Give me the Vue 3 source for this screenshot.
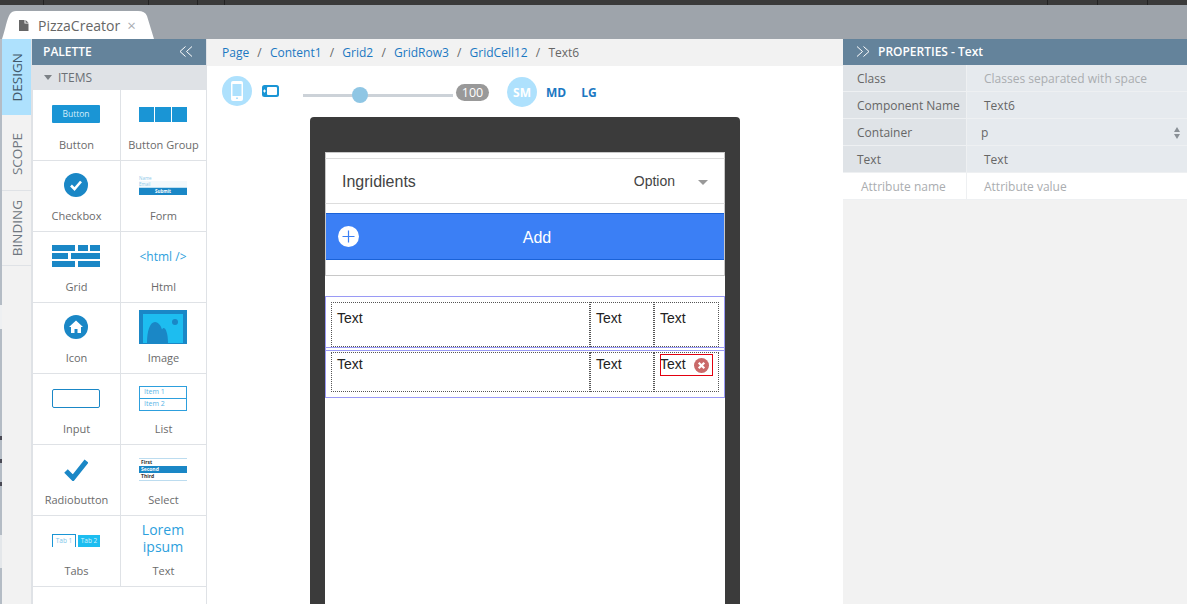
<template>
  <div class="app">
    <div class="topstrip"></div>
    <div class="tabbar">
      <div class="tab">
        <svg class="file-ico" width="10" height="11" viewBox="0 0 10 11"><path d="M0 0h5.500v3.500H9.500V11H0z" fill="#666"/><path d="M6.500 0l3 2.700h-3z" fill="#666"/></svg>
        <span class="tab-name">PizzaCreator</span>
        <span class="tab-x">×</span>
      </div>
    </div>
    <div class="main">
      <div class="edge"></div>
      <div class="sidetabs">
        <div class="stab active h76"><span>DESIGN</span></div>
        <div class="stab h76 scope"><span>SCOPE</span></div>
        <div class="stab h75"><span>BINDING</span></div>
      </div>

      <div class="palette">
        <div class="pal-head">
          <span>PALETTE</span>
          <svg width="14" height="11" viewBox="0 0 14 11" fill="none" stroke="#fff" stroke-width="1"><path d="M6.500.5l-5.500 5 5.500 5M13 .5l-5.500 5 5.500 5"/></svg>
        </div>
        <div class="pal-sub"><i class="tri"></i>ITEMS</div>
        <div class="pal-grid">
          <div class="item">
            <div class="ico"><div class="i-button">Button</div></div>
            <div class="lbl">Button</div>
          </div>
          <div class="item">
            <div class="ico"><div class="i-group"><b></b><b></b><b></b></div></div>
            <div class="lbl">Button Group</div>
          </div>
          <div class="item">
            <div class="ico">
              <svg width="24" height="24" viewBox="0 0 24 24"><circle cx="12" cy="12" r="12" fill="#1a87c6"/><path d="M7 12.500l3.500 3.500 6.500-7.500" fill="none" stroke="#fff" stroke-width="2.600"/></svg>
            </div>
            <div class="lbl">Checkbox</div>
          </div>
          <div class="item">
            <div class="ico">
              <div class="i-form">
                <div class="f-line">Name</div>
                <div class="f-line shade">Email</div>
                <div class="f-btn">Submit</div>
              </div>
            </div>
            <div class="lbl">Form</div>
          </div>
          <div class="item">
            <div class="ico">
              <svg width="48" height="22" viewBox="0 0 48 22" fill="#1a87c6"><rect width="23" height="6"/><rect x="26" width="10" height="6"/><rect x="38" width="10" height="6"/><rect y="8" width="16" height="6"/><rect x="19" y="8" width="29" height="6"/><rect y="16" width="23" height="6"/><rect x="26" y="16" width="22" height="6"/></svg>
            </div>
            <div class="lbl">Grid</div>
          </div>
          <div class="item">
            <div class="ico"><span class="i-html">&lt;html /&gt;</span></div>
            <div class="lbl">Html</div>
          </div>
          <div class="item">
            <div class="ico">
              <svg width="24" height="24" viewBox="0 0 24 24"><circle cx="12" cy="12" r="12" fill="#1a87c6"/><path d="M12 5.500l7 6.500h-2v6h-3.500v-4h-3v4H7v-6H5z" fill="#fff"/></svg>
            </div>
            <div class="lbl">Icon</div>
          </div>
          <div class="item">
            <div class="ico">
              <svg width="48" height="34" viewBox="0 0 48 34"><rect width="48" height="34" fill="#1a87c6"/><rect x="4" y="4" width="40" height="29" fill="#1dbdf0"/><circle cx="36" cy="12" r="3" fill="#1a87c6"/><path d="M8 33C8 21 11 12 16 12c3.500 0 6 4 7 7.500 .5-.8 1-1.500 1.500-1.500 2.500 0 4.500 6 4.500 15z" fill="#1a87c6"/></svg>
            </div>
            <div class="lbl">Image</div>
          </div>
          <div class="item">
            <div class="ico"><div class="i-input"></div></div>
            <div class="lbl">Input</div>
          </div>
          <div class="item">
            <div class="ico">
              <div class="i-list"><div>Item 1</div><div>Item 2</div></div>
            </div>
            <div class="lbl">List</div>
          </div>
          <div class="item">
            <div class="ico">
              <svg width="24" height="24" viewBox="0 0 24 24"><path d="M2 14l7 7L22.500 4" fill="none" stroke="#1a87c6" stroke-width="5"/></svg>
            </div>
            <div class="lbl">Radiobutton</div>
          </div>
          <div class="item">
            <div class="ico">
              <div class="i-select"><div>First</div><div class="sel">Second</div><div>Third</div></div>
            </div>
            <div class="lbl">Select</div>
          </div>
          <div class="item">
            <div class="ico">
              <div class="i-tabs"><div class="t1">Tab 1</div><div class="t2">Tab 2</div></div>
            </div>
            <div class="lbl">Tabs</div>
          </div>
          <div class="item">
            <div class="ico"><div class="i-lorem">Lorem<br>ipsum</div></div>
            <div class="lbl">Text</div>
          </div>
        </div>
      </div>

      <div class="center">
        <div class="crumbs">
          <template v-for="c in crumbs" :key="c">
            <span class="crumb">{{ c }}</span>
            <span class="sep">/</span>
          </template>
          <span class="crumb-last">Text6</span>
        </div>
        <div class="toolbar">
          <div class="round">
            <svg width="12" height="20" viewBox="0 0 12 20"><rect width="12" height="20" rx="2" fill="#fff"/><rect x="1.500" y="3" width="9" height="12" fill="#aee1fd"/><rect x="5" y="16.500" width="2" height="1.500" fill="#aee1fd"/></svg>
          </div>
          <svg class="landscape" width="17" height="12" viewBox="0 0 17 12"><rect width="17" height="12" rx="2.500" fill="#1a95d5"/><rect x="5" y="2" width="10" height="8" rx="1" fill="#fff"/><path d="M1 6h3M2.500 4.500v3" stroke="#fff" stroke-width="1"/></svg>
          <div class="slider">
            <div class="track"></div>
            <div class="knob"></div>
          </div>
          <div class="pill">100</div>
          <div class="round sm">SM</div>
          <span class="size">MD</span>
          <span class="size lg">LG</span>
        </div>
        <div class="phone">
          <div class="screen">
            <div class="top-edge"></div>
            <div class="ing-row">
              <span>Ingridients</span>
              <span class="opt">Option</span>
              <i class="opt-tri"></i>
            </div>
            <div class="add-wrap">
              <div class="add">
                <svg class="plus" width="21" height="21" viewBox="0 0 21 21"><circle cx="10.500" cy="10.500" r="10.500" fill="#fff"/><path d="M10.500 4.500v12M4.500 10.500h12" stroke="#3b7ff5" stroke-width="1.200"/></svg>
                <span>Add</span>
              </div>
            </div>
            <div class="grid-box">
              <div class="g-row" v-for="(r, idx) in 2" :key="r" :class="{ second: idx === 1 }">
                <div class="g-cell big"><p>Text</p></div>
                <div class="g-cell"><p>Text</p></div>
                <div class="g-cell last">
                  <p v-if="idx === 0">Text</p>
                  <div v-else class="selected">
                    <p>Text</p>
                    <svg class="del" width="15" height="15" viewBox="0 0 15 15"><circle cx="7.500" cy="7.500" r="7.500" fill="#c96a6a"/><path d="M4.700 4.700l5.600 5.600M10.300 4.700l-5.600 5.600" stroke="#fff" stroke-width="2.200"/></svg>
                  </div>
                </div>
              </div>
            </div>
          </div>
        </div>
      </div>

      <div class="props">
        <div class="prop-head">
          <svg width="14" height="11" viewBox="0 0 14 11" fill="none" stroke="#fff" stroke-width="1"><path d="M1 .5l5.500 5-5.500 5M7.500 .5l5.500 5-5.500 5"/></svg>
          <span>PROPERTIES - Text</span>
        </div>
        <div class="prop-row">
          <div class="k">Class</div><div class="v ph">Classes separated with space</div>
        </div>
        <div class="prop-row">
          <div class="k">Component Name</div><div class="v">Text6</div>
        </div>
        <div class="prop-row">
          <div class="k">Container</div>
          <div class="v sel-v">p
            <svg width="6" height="12" viewBox="0 0 6 12" fill="#8a9096"><path d="M3 0l3 5H0zM3 12L0 7h6z"/></svg>
          </div>
        </div>
        <div class="prop-row">
          <div class="k">Text</div><div class="v">Text</div>
        </div>
        <div class="prop-row blank">
          <div class="k ph indent">Attribute name</div><div class="v ph">Attribute value</div>
        </div>
      </div>
    </div>
  </div>
</template>

<script setup>
const crumbs = ['Page', 'Content1', 'Grid2', 'GridRow3', 'GridCell12']
</script>

<style>
html, body { margin: 0; height: 100%; overflow: hidden; }
</style>

<style scoped>
.app {
  width: 1187px;
  height: 604px;
  display: flex;
  flex-direction: column;
  overflow: hidden;
  font-family: "Open Sans", sans-serif;
  background: #fff;
}
.topstrip {
  height: 5px;
  background-color: #3a3a3a;
  background-image:
    linear-gradient(#222, #222), linear-gradient(#222, #222), linear-gradient(#222, #222), linear-gradient(#222, #222),
    linear-gradient(#222, #222), linear-gradient(#222, #222), linear-gradient(#222, #222);
  background-size: 1px 100%;
  background-repeat: no-repeat;
  background-position: 43px 0, 148px 0, 197px 0, 224px 0, 1047px 0, 1097px 0, 1147px 0;
}
.tabbar {
  height: 34px;
  background: #9ea4ab;
  display: flex;
  align-items: flex-end;
  padding-left: 2px;
}
/* slanted browser-like tab */
.tab {
  width: 152px;
  height: 28px;
  background: #fff;
  clip-path: path("M0 28C3 20 5 7 8 3Q10 0 14 0H136Q143 0 145 5L152 28z");
  display: flex;
  align-items: center;
  padding-left: 17px;
  box-sizing: border-box;
  font-size: 14px;
  color: #666;
}
.file-ico { margin-right: 9px; }
.tab-x { margin-left: 7px; color: #a9adb2; font-size: 15px; }

.main { flex: 1; display: flex; min-height: 0; }
.edge {
  width: 2px;
  background: linear-gradient(
    #b4bcc5 0 266px,
    #eef0f2 266px 290px,
    #b4bcc5 290px 397px,
    #4a4a55 397px 401px,
    #b4bcc5 401px 420px,
    #4a4a55 420px 424px,
    #b4bcc5 424px 443px,
    #4a4a55 443px 447px,
    #b4bcc5 447px 496px,
    #e4e7ea 496px 529px,
    #b4bcc5 529px
  );
}
.sidetabs { width: 29px; background: #f2f2f2; border-right: 1px solid #dfe2e6; }
.stab {
  border-bottom: 1px solid #dfe2e6;
  box-sizing: border-box;
  display: flex;
  align-items: center;
  justify-content: center;
  color: #6f7780;
  font-size: 13.500px;
}
.h76 { height: 76px; }
.h75 { height: 75px; }
.stab.scope { padding-top: 4px; }
.stab span { writing-mode: vertical-rl; transform: rotate(180deg); }
.stab.active { background: #aee1fd; color: #43596b; border-bottom: 0; }

.palette { width: 174px; display: flex; flex-direction: column; border-right: 1px solid #dfe2e6; }
.pal-head {
  height: 26px;
  background: #64839b;
  color: #fff;
  font-size: 12px;
  font-weight: 600;
  display: flex;
  align-items: center;
  justify-content: space-between;
  padding: 0 13px 2px 11px;
  box-sizing: border-box;
}
.pal-sub {
  height: 25px;
  background: #dfe2e6;
  color: #6b7075;
  font-size: 12px;
  display: flex;
  align-items: center;
  padding-left: 12px;
}
.tri {
  width: 0;
  height: 0;
  border-left: 4px solid transparent;
  border-right: 4px solid transparent;
  border-top: 5px solid #7c8186;
  margin-right: 6px;
}
.pal-grid {
  display: grid;
  grid-template-columns: 88px 85px;
  grid-auto-rows: 71px;
  border-left: 1px solid #dfe2e6;
  flex: 1;
}
.item {
  border-right: 1px solid #dfe2e6;
  border-bottom: 1px solid #dfe2e6;
  box-sizing: border-box;
  display: flex;
  flex-direction: column;
  align-items: center;
  color: #6b6b6b;
  font-size: 11px;
}
.item:nth-child(2n) { border-right: 0; }
.ico {
  height: 47px;
  padding: 1px 1px 0 0;
  box-sizing: border-box;
  display: flex;
  align-items: center;
  justify-content: center;
  width: 100%;
}
.lbl { line-height: 14px; margin-top: 1px; }
.i-button {
  width: 48px;
  height: 18px;
  background: #1a95d5;
  border-radius: 1px;
  color: #d3eefb;
  font-size: 8.500px;
  text-align: center;
  line-height: 17px;
}
.i-group { display: flex; width: 48px; height: 15px; gap: 1px; }
.i-group b { flex: 1; background: #1a95d5; }
.i-form { width: 48px; font-size: 4.500px; color: #8fc9e8; line-height: 6px; }
.f-line { height: 6px; }
.f-line.shade { background: #f3f9fc; border-bottom: 1px solid #bde0f2; }
.f-btn { background: #1a87c6; color: #fff; text-align: center; height: 7px; line-height: 7px; font-weight: 700; }
.i-html { color: #2d9fdd; font-size: 12px; }
.i-input { width: 46px; height: 17px; border: 1px solid #1a87c6; border-radius: 2px; }
.i-list { width: 46px; border: 1px solid #2d9fdd; font-size: 7px; color: #55b4e6; line-height: 10.500px; }
.i-list div { padding-left: 4px; height: 11px; }
.i-list div + div { border-top: 1px solid #2d9fdd; }
.i-select { width: 48px; font-size: 5px; line-height: 7px; font-weight: 700; color: #333; border-top: 1px solid #bcdcef; border-bottom: 1px solid #bcdcef; }
.i-select div { padding-left: 2px; height: 7px; }
.i-select .sel { background: #1a87c6; color: #fff; }
.i-tabs { display: flex; gap: 2px; align-items: flex-end; width: 48px; font-size: 6.500px; text-align: center; }
.t1 { flex: 1; height: 12px; line-height: 12px; border: 1px solid #1a95d5; border-bottom: 0; color: #7fc5ea; }
.t2 { flex: 1; height: 12px; line-height: 12px; background: #1dbdf0; color: #d7f3fc; }
.i-lorem { color: #2d9fdd; font-size: 14px; line-height: 17px; text-align: center; margin-top: -4px; }

.center { width: 636px; display: flex; flex-direction: column; background: #fff; }
.crumbs {
  height: 27px;
  background: #f2f2f2;
  display: flex;
  align-items: center;
  padding-left: 15px;
  font-size: 12px;
  color: #1b78c2;
  gap: 8.200px;
}
.sep { color: #666; }
.crumb-last { color: #666; }
.toolbar {
  height: 51px;
  display: flex;
  align-items: flex-start;
  padding-left: 15px;
}
.round {
  width: 30px;
  height: 30px;
  border-radius: 50%;
  background: #aee1fd;
  display: flex;
  align-items: center;
  justify-content: center;
  margin-top: 10px;
}
.landscape { margin: 19px 0 0 10px; }
.slider { width: 150px; margin: 19px 0 0 24px; position: relative; height: 20px; }
.track { height: 3px; background: #ccd2d8; margin-top: 9px; }
.knob {
  position: absolute;
  left: 49px;
  top: 2px;
  width: 16px;
  height: 16px;
  border-radius: 50%;
  background: #8fc6e4;
}
.pill {
  width: 33px;
  height: 17px;
  line-height: 17px;
  margin: 18px 0 0 3px;
  text-align: center;
  background: #999;
  color: #fff;
  font-size: 12.500px;
  border-radius: 9px;
}
.round.sm { margin: 11px 0 0 18px; color: #fff; font-size: 12px; font-weight: 700; }
.size { color: #1b78c2; font-size: 12px; font-weight: 700; margin: 18px 0 0 9px; }
.size.lg { margin-left: 15px; }

.phone {
  margin-left: 103px;
  width: 430px;
  flex: 1;
  background: #3b3b3b;
  border-radius: 4px 4px 0 0;
  padding: 35px 15px 0;
  box-sizing: border-box;
  min-height: 0;
}
.screen { background: #fff; height: 100%; font-family: "Liberation Sans", Arial, sans-serif; }
.top-edge { height: 5px; border-top: 1px solid #c8c8c8; border-left: 1px solid #c8c8c8; border-right: 1px solid #c8c8c8; }
.ing-row {
  height: 46px;
  border-top: 1px solid #ddd;
  border-bottom: 1px solid #ddd;
  border-left: 1px solid #c8c8c8;
  border-right: 1px solid #c8c8c8;
  display: flex;
  align-items: center;
  padding: 2px 16px 0 16px;
  color: #444;
  font-size: 16px;
  box-sizing: border-box;
}
.opt { margin: -2px 0 0 auto; font-size: 14px; }
.opt-tri {
  width: 0;
  height: 0;
  margin-left: 23px;
  border-left: 5px solid transparent;
  border-right: 5px solid transparent;
  border-top: 5px solid #999;
}
.add-wrap {
  padding: 9px 0 15px;
  border-left: 1px solid #c8c8c8;
  border-right: 1px solid #c8c8c8;
  border-bottom: 1px solid #c8c8c8;
}
.add {
  height: 47px;
  box-sizing: border-box;
  background: #3b7ff5;
  border-top: 1px solid #1a62d8;
  border-bottom: 1px solid #1a62d8;
  color: #fff;
  font-size: 16px;
  display: flex;
  align-items: center;
  justify-content: center;
  position: relative;
  padding: 2px 0 0 24px;
}
.plus { position: absolute; left: 12px; top: 12px; }
.grid-box { margin-top: 20px; }
.g-row {
  border: 1px solid #9a9af5;
  height: 55px;
  box-sizing: border-box;
  padding: 5px;
  display: flex;
}
.g-row.second { margin-top: -4px; height: 51px; padding-top: 4px; }
.g-cell {
  width: 65px;
  height: 45px;
  box-sizing: border-box;
  border: 1px dotted #555;
  padding: 7px 5px 0;
  font-size: 14px;
  color: #222;
}
.second .g-cell { height: 40px; padding-top: 3px; }
.g-cell.big { width: 259px; }
.g-cell:nth-child(2) { width: 64px; }
.g-cell p { margin: 0; line-height: 16px; }
.selected {
  border: 1px solid #e3000f;
  height: 22px;
  width: 53px;
  margin: -2px 0 0;
  display: flex;
  align-items: center;
  box-sizing: border-box;
  justify-content: space-between;
  padding: 0 3px 2px 0;
}
.selected p { margin-left: -1px; }
.selected .del { margin-top: 2px; }

.props { flex: 1; background: #f2f2f2; display: flex; flex-direction: column; font-size: 12px; color: #666; }
.prop-head {
  height: 26px;
  background: #64839b;
  color: #fff;
  font-weight: 600;
  display: flex;
  align-items: center;
  padding: 0 0 2px 13px;
  box-sizing: border-box;
  gap: 8px;
}
.prop-row { display: flex; height: 27px; border-bottom: 1px solid #eef0f2; box-sizing: border-box; }
.k { width: 124px; background: #dfe3e7; padding-left: 14px; line-height: 28px; box-sizing: border-box; border-right: 1px solid #eef0f2; }
.v { flex: 1; background: #e6eaee; padding-left: 17px; line-height: 28px; box-sizing: border-box; }
.ph { color: #aaadb0; }
.sel-v { display: flex; align-items: center; justify-content: space-between; padding: 2px 7px 0 14px; }
.blank .k, .blank .v { background: #fff; }
.indent { padding-left: 18px; }
</style>
